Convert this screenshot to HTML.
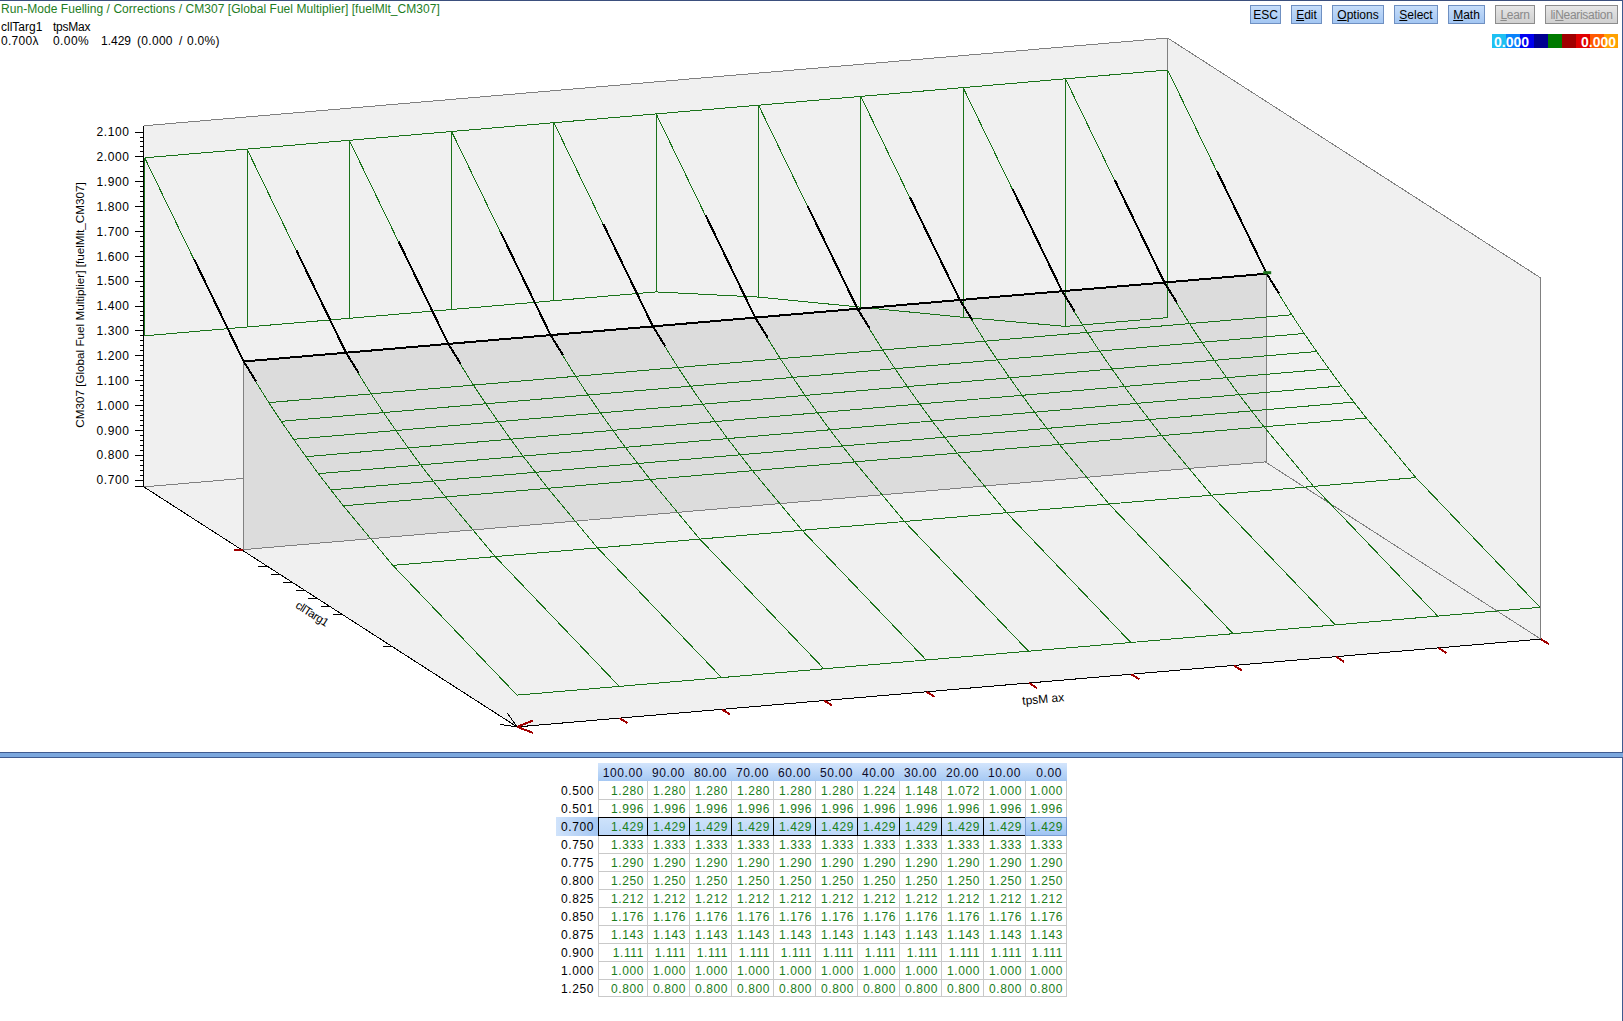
<!DOCTYPE html>
<html><head><meta charset="utf-8"><style>
html,body{margin:0;padding:0;width:1623px;height:1021px;overflow:hidden;background:#fff;position:relative}
body{font-family:"Liberation Sans",sans-serif;font-size:12px;color:#000}
.abs{position:absolute}
#tb{position:absolute;left:0;top:0;width:1623px;height:1px;background:#3b4f7d}
#rb{position:absolute;left:1622px;top:0;width:1px;height:1021px;background:#3f5a8f}
.t{position:absolute;white-space:pre;line-height:14px}
.btn{position:absolute;top:5px;height:17px;border:1px solid #6f90c2;background:linear-gradient(#c6ddfa,#a3c6f2);font-size:12px;line-height:19px;text-align:center;color:#000;box-sizing:content-box;overflow:hidden}
.btn.dis{border-color:#8c8c8c;background:linear-gradient(#e6e6e6,#d0d0d0);color:#8a8a8a;letter-spacing:-0.3px}
.btn u{text-decoration:underline}
#cbar{position:absolute;left:1492px;top:34px;width:126px;height:14px;display:flex}
#cbar span{flex:1}
.cbt{position:absolute;top:34px;color:#fff;font-weight:bold;font-size:14px;line-height:16px}
svg{position:absolute;left:0;top:0}
svg line,svg polyline,svg polygon{shape-rendering:crispEdges}
.yl{font-family:"Liberation Sans",sans-serif;font-size:12px;text-anchor:end;fill:#000;letter-spacing:0.6px}
.al{font-family:"Liberation Sans",sans-serif;font-size:12px;fill:#000}
#sep{position:absolute;left:0;top:752px;width:1623px;height:4px;border-top:1px solid #3f5a8f;border-bottom:1px solid #3f5a8f;background:#7ba7dd}
.hdr{position:absolute;background:linear-gradient(#d3e5fc,#a5c8f3)}
.ht{position:absolute;height:18px;line-height:20px;text-align:right;color:#0a0a28;letter-spacing:0.6px}
.rl{position:absolute;left:556px;width:38px;height:18px;line-height:21px;text-align:right;color:#000;letter-spacing:0.6px}
.rlh{position:absolute;background:linear-gradient(90deg,#d0e3fb,#a3c6f2)}
.selfill{position:absolute;background:linear-gradient(#cfe3fb,#bcd7f8)}
.gl{position:absolute;background:#c9c9c9}
.bl{position:absolute;background:#000}
.cur{position:absolute;border:1px solid #7b9ed3;background:linear-gradient(#c4dcfa,#9fc4f2)}
.cell{position:absolute;height:18px;line-height:21px;text-align:right;color:#1a7d1a;letter-spacing:0.6px}
</style></head><body>
<div id="tb"></div><div id="rb"></div>
<div class="t" style="left:1px;top:2px;color:#1e7d1e;letter-spacing:0.05px">Run-Mode Fuelling / Corrections / CM307 [Global Fuel Multiplier] [fuelMlt_CM307]</div>
<div class="t" style="left:1px;top:20px">cllTarg1</div>
<div class="t" style="left:53px;top:20px;letter-spacing:-0.25px">tpsMax</div>
<div class="t" style="left:1px;top:34px;letter-spacing:0.3px">0.700λ</div>
<div class="t" style="left:53px;top:34px;letter-spacing:0.4px">0.00%</div>
<div class="t" style="left:101px;top:34px">1.429</div>
<div class="t" style="left:137px;top:34px;letter-spacing:0.3px">(0.000</div>
<div class="t" style="left:179px;top:34px">/</div>
<div class="t" style="left:187px;top:34px;letter-spacing:0.3px">0.0%)</div>
<div class="btn" style="left:1250px;width:29px">ESC</div>
<div class="btn" style="left:1291px;width:29px"><u>E</u>dit</div>
<div class="btn" style="left:1332px;width:50px"><u>O</u>ptions</div>
<div class="btn" style="left:1394px;width:42px"><u>S</u>elect</div>
<div class="btn" style="left:1448px;width:35px"><u>M</u>ath</div>
<div class="btn dis" style="left:1495px;width:38px"><u>L</u>earn</div>
<div class="btn dis" style="left:1545px;width:71px">li<u>N</u>earisation</div>
<div id="cbar"><span style="background:#1ec0f2"></span><span style="background:#0a82fa"></span><span style="background:#0000f0"></span><span style="background:#000090"></span><span style="background:#007a00"></span><span style="background:#a00000"></span><span style="background:#e00000"></span><span style="background:#ff5a00"></span><span style="background:#ffa000"></span></div>
<div class="cbt" style="left:1494px">0.000</div>
<div class="cbt" style="left:1581px">0.000</div>
<svg width="1623" height="752" viewBox="0 0 1623 752">
<polygon points="143.9,125.8 1167.6,38.0 1540.8,278.0 1540.8,639.1 517.1,726.9 143.9,486.9" fill="#f0f0f0"/>
<line x1="143.9" y1="125.8" x2="1167.6" y2="38.0" stroke="#808080" stroke-width="1"/>
<line x1="1167.6" y1="38.0" x2="1540.8" y2="278.0" stroke="#808080" stroke-width="1"/>
<line x1="1167.6" y1="38.0" x2="1167.6" y2="399.1" stroke="#808080" stroke-width="1"/>
<line x1="1540.8" y1="278.0" x2="1540.8" y2="639.1" stroke="#808080" stroke-width="1"/>
<line x1="143.9" y1="486.9" x2="1167.6" y2="399.1" stroke="#808080" stroke-width="1"/>
<line x1="1167.6" y1="399.1" x2="1540.8" y2="639.1" stroke="#808080" stroke-width="1"/>
<polygon points="243.7,361.5 1266.7,273.7 1266.7,461.8 243.7,549.6" fill="#dcdcdc" stroke="#808080" stroke-width="1"/>
<line x1="143.9" y1="125.8" x2="143.9" y2="486.9" stroke="#000" stroke-width="1"/>
<line x1="143.9" y1="486.9" x2="517.1" y2="726.9" stroke="#000" stroke-width="1"/>
<line x1="517.1" y1="726.9" x2="1540.8" y2="639.1" stroke="#000" stroke-width="1"/>
<line x1="135.4" y1="480.0" x2="143.9" y2="480.0" stroke="#000" stroke-width="1"/>
<text x="129.5" y="484.3" class="yl">0.700</text>
<line x1="140.4" y1="475.0" x2="143.9" y2="475.0" stroke="#000" stroke-width="1"/>
<line x1="140.4" y1="470.0" x2="143.9" y2="470.0" stroke="#000" stroke-width="1"/>
<line x1="140.4" y1="465.1" x2="143.9" y2="465.1" stroke="#000" stroke-width="1"/>
<line x1="140.4" y1="460.1" x2="143.9" y2="460.1" stroke="#000" stroke-width="1"/>
<line x1="135.4" y1="455.1" x2="143.9" y2="455.1" stroke="#000" stroke-width="1"/>
<text x="129.5" y="459.4" class="yl">0.800</text>
<line x1="140.4" y1="450.2" x2="143.9" y2="450.2" stroke="#000" stroke-width="1"/>
<line x1="140.4" y1="445.2" x2="143.9" y2="445.2" stroke="#000" stroke-width="1"/>
<line x1="140.4" y1="440.2" x2="143.9" y2="440.2" stroke="#000" stroke-width="1"/>
<line x1="140.4" y1="435.2" x2="143.9" y2="435.2" stroke="#000" stroke-width="1"/>
<line x1="135.4" y1="430.3" x2="143.9" y2="430.3" stroke="#000" stroke-width="1"/>
<text x="129.5" y="434.6" class="yl">0.900</text>
<line x1="140.4" y1="425.3" x2="143.9" y2="425.3" stroke="#000" stroke-width="1"/>
<line x1="140.4" y1="420.3" x2="143.9" y2="420.3" stroke="#000" stroke-width="1"/>
<line x1="140.4" y1="415.4" x2="143.9" y2="415.4" stroke="#000" stroke-width="1"/>
<line x1="140.4" y1="410.4" x2="143.9" y2="410.4" stroke="#000" stroke-width="1"/>
<line x1="135.4" y1="405.4" x2="143.9" y2="405.4" stroke="#000" stroke-width="1"/>
<text x="129.5" y="409.7" class="yl">1.000</text>
<line x1="140.4" y1="400.4" x2="143.9" y2="400.4" stroke="#000" stroke-width="1"/>
<line x1="140.4" y1="395.5" x2="143.9" y2="395.5" stroke="#000" stroke-width="1"/>
<line x1="140.4" y1="390.5" x2="143.9" y2="390.5" stroke="#000" stroke-width="1"/>
<line x1="140.4" y1="385.5" x2="143.9" y2="385.5" stroke="#000" stroke-width="1"/>
<line x1="135.4" y1="380.6" x2="143.9" y2="380.6" stroke="#000" stroke-width="1"/>
<text x="129.5" y="384.9" class="yl">1.100</text>
<line x1="140.4" y1="375.6" x2="143.9" y2="375.6" stroke="#000" stroke-width="1"/>
<line x1="140.4" y1="370.6" x2="143.9" y2="370.6" stroke="#000" stroke-width="1"/>
<line x1="140.4" y1="365.6" x2="143.9" y2="365.6" stroke="#000" stroke-width="1"/>
<line x1="140.4" y1="360.7" x2="143.9" y2="360.7" stroke="#000" stroke-width="1"/>
<line x1="135.4" y1="355.7" x2="143.9" y2="355.7" stroke="#000" stroke-width="1"/>
<text x="129.5" y="360.0" class="yl">1.200</text>
<line x1="140.4" y1="350.7" x2="143.9" y2="350.7" stroke="#000" stroke-width="1"/>
<line x1="140.4" y1="345.8" x2="143.9" y2="345.8" stroke="#000" stroke-width="1"/>
<line x1="140.4" y1="340.8" x2="143.9" y2="340.8" stroke="#000" stroke-width="1"/>
<line x1="140.4" y1="335.8" x2="143.9" y2="335.8" stroke="#000" stroke-width="1"/>
<line x1="135.4" y1="330.8" x2="143.9" y2="330.8" stroke="#000" stroke-width="1"/>
<text x="129.5" y="335.1" class="yl">1.300</text>
<line x1="140.4" y1="325.9" x2="143.9" y2="325.9" stroke="#000" stroke-width="1"/>
<line x1="140.4" y1="320.9" x2="143.9" y2="320.9" stroke="#000" stroke-width="1"/>
<line x1="140.4" y1="315.9" x2="143.9" y2="315.9" stroke="#000" stroke-width="1"/>
<line x1="140.4" y1="311.0" x2="143.9" y2="311.0" stroke="#000" stroke-width="1"/>
<line x1="135.4" y1="306.0" x2="143.9" y2="306.0" stroke="#000" stroke-width="1"/>
<text x="129.5" y="310.3" class="yl">1.400</text>
<line x1="140.4" y1="301.0" x2="143.9" y2="301.0" stroke="#000" stroke-width="1"/>
<line x1="140.4" y1="296.0" x2="143.9" y2="296.0" stroke="#000" stroke-width="1"/>
<line x1="140.4" y1="291.1" x2="143.9" y2="291.1" stroke="#000" stroke-width="1"/>
<line x1="140.4" y1="286.1" x2="143.9" y2="286.1" stroke="#000" stroke-width="1"/>
<line x1="135.4" y1="281.1" x2="143.9" y2="281.1" stroke="#000" stroke-width="1"/>
<text x="129.5" y="285.4" class="yl">1.500</text>
<line x1="140.4" y1="276.2" x2="143.9" y2="276.2" stroke="#000" stroke-width="1"/>
<line x1="140.4" y1="271.2" x2="143.9" y2="271.2" stroke="#000" stroke-width="1"/>
<line x1="140.4" y1="266.2" x2="143.9" y2="266.2" stroke="#000" stroke-width="1"/>
<line x1="140.4" y1="261.2" x2="143.9" y2="261.2" stroke="#000" stroke-width="1"/>
<line x1="135.4" y1="256.3" x2="143.9" y2="256.3" stroke="#000" stroke-width="1"/>
<text x="129.5" y="260.6" class="yl">1.600</text>
<line x1="140.4" y1="251.3" x2="143.9" y2="251.3" stroke="#000" stroke-width="1"/>
<line x1="140.4" y1="246.3" x2="143.9" y2="246.3" stroke="#000" stroke-width="1"/>
<line x1="140.4" y1="241.4" x2="143.9" y2="241.4" stroke="#000" stroke-width="1"/>
<line x1="140.4" y1="236.4" x2="143.9" y2="236.4" stroke="#000" stroke-width="1"/>
<line x1="135.4" y1="231.4" x2="143.9" y2="231.4" stroke="#000" stroke-width="1"/>
<text x="129.5" y="235.7" class="yl">1.700</text>
<line x1="140.4" y1="226.4" x2="143.9" y2="226.4" stroke="#000" stroke-width="1"/>
<line x1="140.4" y1="221.5" x2="143.9" y2="221.5" stroke="#000" stroke-width="1"/>
<line x1="140.4" y1="216.5" x2="143.9" y2="216.5" stroke="#000" stroke-width="1"/>
<line x1="140.4" y1="211.5" x2="143.9" y2="211.5" stroke="#000" stroke-width="1"/>
<line x1="135.4" y1="206.6" x2="143.9" y2="206.6" stroke="#000" stroke-width="1"/>
<text x="129.5" y="210.9" class="yl">1.800</text>
<line x1="140.4" y1="201.6" x2="143.9" y2="201.6" stroke="#000" stroke-width="1"/>
<line x1="140.4" y1="196.6" x2="143.9" y2="196.6" stroke="#000" stroke-width="1"/>
<line x1="140.4" y1="191.6" x2="143.9" y2="191.6" stroke="#000" stroke-width="1"/>
<line x1="140.4" y1="186.7" x2="143.9" y2="186.7" stroke="#000" stroke-width="1"/>
<line x1="135.4" y1="181.7" x2="143.9" y2="181.7" stroke="#000" stroke-width="1"/>
<text x="129.5" y="186.0" class="yl">1.900</text>
<line x1="140.4" y1="176.7" x2="143.9" y2="176.7" stroke="#000" stroke-width="1"/>
<line x1="140.4" y1="171.8" x2="143.9" y2="171.8" stroke="#000" stroke-width="1"/>
<line x1="140.4" y1="166.8" x2="143.9" y2="166.8" stroke="#000" stroke-width="1"/>
<line x1="140.4" y1="161.8" x2="143.9" y2="161.8" stroke="#000" stroke-width="1"/>
<line x1="135.4" y1="156.8" x2="143.9" y2="156.8" stroke="#000" stroke-width="1"/>
<text x="129.5" y="161.1" class="yl">2.000</text>
<line x1="140.4" y1="151.9" x2="143.9" y2="151.9" stroke="#000" stroke-width="1"/>
<line x1="140.4" y1="146.9" x2="143.9" y2="146.9" stroke="#000" stroke-width="1"/>
<line x1="140.4" y1="141.9" x2="143.9" y2="141.9" stroke="#000" stroke-width="1"/>
<line x1="140.4" y1="137.0" x2="143.9" y2="137.0" stroke="#000" stroke-width="1"/>
<line x1="135.4" y1="132.0" x2="143.9" y2="132.0" stroke="#000" stroke-width="1"/>
<text x="129.5" y="136.3" class="yl">2.100</text>
<line x1="135.4" y1="486.9" x2="143.9" y2="486.9" stroke="#000" stroke-width="1"/>
<polyline points="144.7,335.8 144.7,157.8 244.0,362.8 268.8,402.6 281.2,421.3 293.6,439.3 306.0,456.7 318.4,473.7 330.9,489.9 343.3,505.8 392.9,565.4 517.0,695.1" fill="none" stroke="#1a721a" stroke-width="1"/>
<polyline points="247.0,327.0 247.0,149.1 346.3,354.0 371.1,393.9 383.5,412.6 395.9,430.5 408.3,447.9 420.7,464.9 433.2,481.1 445.6,497.0 495.2,556.6 619.3,686.4" fill="none" stroke="#1a721a" stroke-width="1"/>
<polyline points="349.3,318.3 349.3,140.3 448.6,345.2 473.4,385.1 485.8,403.8 498.2,421.7 510.6,439.2 523.0,456.1 535.5,472.3 547.9,488.3 597.5,547.9 721.6,677.6" fill="none" stroke="#1a721a" stroke-width="1"/>
<polyline points="451.6,309.5 451.6,131.5 550.9,336.4 575.7,376.3 588.1,395.0 600.5,412.9 612.9,430.4 625.3,447.3 637.8,463.5 650.2,479.5 699.8,539.1 823.9,668.8" fill="none" stroke="#1a721a" stroke-width="1"/>
<polyline points="553.9,300.7 553.9,122.7 653.2,327.7 678.0,367.5 690.4,386.2 702.8,404.2 715.2,421.6 727.6,438.6 740.1,454.8 752.5,470.7 802.1,530.3 926.2,660.0" fill="none" stroke="#1a721a" stroke-width="1"/>
<polyline points="656.2,291.9 656.2,113.9 755.5,318.9 780.3,358.7 792.7,377.4 805.1,395.4 817.5,412.8 829.9,429.8 842.4,446.0 854.8,461.9 904.4,521.5 1028.5,651.2" fill="none" stroke="#1a721a" stroke-width="1"/>
<polyline points="758.5,297.1 758.5,105.2 857.8,310.1 882.6,350.0 895.0,368.7 907.4,386.6 919.8,404.0 932.2,421.0 944.6,437.2 957.1,453.1 1006.7,512.7 1130.8,642.5" fill="none" stroke="#1a721a" stroke-width="1"/>
<polyline points="860.8,307.2 860.8,96.4 960.1,301.3 984.9,341.2 997.3,359.9 1009.7,377.8 1022.1,395.3 1034.5,412.2 1047.0,428.4 1059.4,444.4 1109.0,504.0 1233.1,633.7" fill="none" stroke="#1a721a" stroke-width="1"/>
<polyline points="963.1,317.3 963.1,87.6 1062.4,292.5 1087.2,332.4 1099.6,351.1 1112.0,369.0 1124.4,386.5 1136.8,403.4 1149.3,419.6 1161.7,435.6 1211.3,495.2 1335.4,624.9" fill="none" stroke="#1a721a" stroke-width="1"/>
<polyline points="1065.4,326.4 1065.4,78.8 1164.7,283.8 1189.5,323.6 1201.9,342.3 1214.3,360.3 1226.7,377.7 1239.1,394.7 1251.6,410.9 1264.0,426.8 1313.6,486.4 1437.7,616.1" fill="none" stroke="#1a721a" stroke-width="1"/>
<polyline points="1167.7,317.6 1167.7,70.0 1267.0,275.0 1291.8,314.8 1304.2,333.5 1316.6,351.5 1329.0,368.9 1341.4,385.9 1353.9,402.1 1366.3,418.0 1415.9,477.6 1540.0,607.3" fill="none" stroke="#1a721a" stroke-width="1"/>
<polyline points="144.7,335.8 247.0,327.0 349.3,318.3 451.6,309.5 553.9,300.7 656.2,291.9 758.5,297.1 860.8,307.2 963.1,317.3 1065.4,326.4 1167.7,317.6" fill="none" stroke="#1a721a" stroke-width="1"/>
<polyline points="144.7,157.8 247.0,149.1 349.3,140.3 451.6,131.5 553.9,122.7 656.2,113.9 758.5,105.2 860.8,96.4 963.1,87.6 1065.4,78.8 1167.7,70.0" fill="none" stroke="#1a721a" stroke-width="1"/>
<polyline points="268.8,402.6 371.1,393.9 473.4,385.1 575.7,376.3 678.0,367.5 780.3,358.7 882.6,350.0 984.9,341.2 1087.2,332.4 1189.5,323.6 1291.8,314.8" fill="none" stroke="#1a721a" stroke-width="1"/>
<polyline points="281.2,421.3 383.5,412.6 485.8,403.8 588.1,395.0 690.4,386.2 792.7,377.4 895.0,368.7 997.3,359.9 1099.6,351.1 1201.9,342.3 1304.2,333.5" fill="none" stroke="#1a721a" stroke-width="1"/>
<polyline points="293.6,439.3 395.9,430.5 498.2,421.7 600.5,412.9 702.8,404.2 805.1,395.4 907.4,386.6 1009.7,377.8 1112.0,369.0 1214.3,360.3 1316.6,351.5" fill="none" stroke="#1a721a" stroke-width="1"/>
<polyline points="306.0,456.7 408.3,447.9 510.6,439.2 612.9,430.4 715.2,421.6 817.5,412.8 919.8,404.0 1022.1,395.3 1124.4,386.5 1226.7,377.7 1329.0,368.9" fill="none" stroke="#1a721a" stroke-width="1"/>
<polyline points="318.4,473.7 420.7,464.9 523.0,456.1 625.3,447.3 727.6,438.6 829.9,429.8 932.2,421.0 1034.5,412.2 1136.8,403.4 1239.1,394.7 1341.4,385.9" fill="none" stroke="#1a721a" stroke-width="1"/>
<polyline points="330.9,489.9 433.2,481.1 535.5,472.3 637.8,463.5 740.1,454.8 842.4,446.0 944.6,437.2 1047.0,428.4 1149.3,419.6 1251.6,410.9 1353.9,402.1" fill="none" stroke="#1a721a" stroke-width="1"/>
<polyline points="343.3,505.8 445.6,497.0 547.9,488.3 650.2,479.5 752.5,470.7 854.8,461.9 957.1,453.1 1059.4,444.4 1161.7,435.6 1264.0,426.8 1366.3,418.0" fill="none" stroke="#1a721a" stroke-width="1"/>
<polyline points="392.9,565.4 495.2,556.6 597.5,547.9 699.8,539.1 802.1,530.3 904.4,521.5 1006.7,512.7 1109.0,504.0 1211.3,495.2 1313.6,486.4 1415.9,477.6" fill="none" stroke="#1a721a" stroke-width="1"/>
<polyline points="517.0,695.1 619.3,686.4 721.6,677.6 823.9,668.8 926.2,660.0 1028.5,651.2 1130.8,642.5 1233.1,633.7 1335.4,624.9 1437.7,616.1 1540.0,607.3" fill="none" stroke="#1a721a" stroke-width="1"/>
<polyline points="243.7,361.5 346.0,352.7 448.3,343.9 550.6,335.1 652.9,326.4 755.2,317.6 857.5,308.8 959.8,300.0 1062.1,291.2 1164.4,282.5 1266.7,273.7" fill="none" stroke="#000" stroke-width="2"/>
<polyline points="194.0,259.0 243.7,361.5 256.1,381.4" fill="none" stroke="#000" stroke-width="2"/>
<polyline points="296.3,250.2 346.0,352.7 358.4,372.6" fill="none" stroke="#000" stroke-width="2"/>
<polyline points="398.6,241.5 448.3,343.9 460.7,363.9" fill="none" stroke="#000" stroke-width="2"/>
<polyline points="500.9,232.7 550.6,335.1 563.0,355.1" fill="none" stroke="#000" stroke-width="2"/>
<polyline points="603.2,223.9 652.9,326.4 665.3,346.3" fill="none" stroke="#000" stroke-width="2"/>
<polyline points="705.5,215.1 755.2,317.6 767.6,337.5" fill="none" stroke="#000" stroke-width="2"/>
<polyline points="807.8,206.3 857.5,308.8 869.9,328.7" fill="none" stroke="#000" stroke-width="2"/>
<polyline points="910.1,197.6 959.8,300.0 972.2,320.0" fill="none" stroke="#000" stroke-width="2"/>
<polyline points="1012.4,188.8 1062.1,291.2 1074.5,311.2" fill="none" stroke="#000" stroke-width="2"/>
<polyline points="1114.7,180.0 1164.4,282.5 1176.8,302.4" fill="none" stroke="#000" stroke-width="2"/>
<polyline points="1217.0,171.2 1266.7,273.7 1279.1,293.6" fill="none" stroke="#000" stroke-width="2"/>
<rect x="1263.2" y="271.2" width="8" height="3" fill="#1a721a"/>
<line x1="258.3" y1="566.9" x2="268.3" y2="566.9" stroke="#000" stroke-width="1"/>
<line x1="270.7" y1="574.9" x2="280.7" y2="574.9" stroke="#000" stroke-width="1"/>
<line x1="283.2" y1="582.9" x2="293.2" y2="582.9" stroke="#000" stroke-width="1"/>
<line x1="295.6" y1="590.9" x2="305.6" y2="590.9" stroke="#000" stroke-width="1"/>
<line x1="308.1" y1="598.9" x2="318.1" y2="598.9" stroke="#000" stroke-width="1"/>
<line x1="320.5" y1="606.9" x2="330.5" y2="606.9" stroke="#000" stroke-width="1"/>
<line x1="332.9" y1="614.9" x2="342.9" y2="614.9" stroke="#000" stroke-width="1"/>
<line x1="382.7" y1="646.9" x2="392.7" y2="646.9" stroke="#000" stroke-width="1"/>
<line x1="234.4" y1="549.6" x2="243.4" y2="549.6" stroke="#a00000" stroke-width="2"/>
<line x1="500.1" y1="724.4" x2="517.1" y2="726.9" stroke="#000" stroke-width="1"/>
<line x1="507.6" y1="713.4" x2="517.1" y2="726.9" stroke="#000" stroke-width="1"/>
<line x1="517.1" y1="726.9" x2="532.6" y2="720.6" stroke="#a00000" stroke-width="2"/>
<line x1="517.1" y1="726.9" x2="533.1" y2="732.9" stroke="#a00000" stroke-width="2"/>
<line x1="619.5" y1="718.1" x2="627.5" y2="723.1" stroke="#a00000" stroke-width="2"/>
<line x1="721.8" y1="709.3" x2="729.8" y2="714.3" stroke="#a00000" stroke-width="2"/>
<line x1="824.2" y1="700.6" x2="832.2" y2="705.6" stroke="#a00000" stroke-width="2"/>
<line x1="926.6" y1="691.8" x2="934.6" y2="696.8" stroke="#a00000" stroke-width="2"/>
<line x1="1029.0" y1="683.0" x2="1037.0" y2="688.0" stroke="#a00000" stroke-width="2"/>
<line x1="1131.3" y1="674.2" x2="1139.3" y2="679.2" stroke="#a00000" stroke-width="2"/>
<line x1="1233.7" y1="665.4" x2="1241.7" y2="670.4" stroke="#a00000" stroke-width="2"/>
<line x1="1336.1" y1="656.7" x2="1344.1" y2="661.7" stroke="#a00000" stroke-width="2"/>
<line x1="1438.4" y1="647.9" x2="1446.4" y2="652.9" stroke="#a00000" stroke-width="2"/>
<line x1="1540.8" y1="639.1" x2="1548.8" y2="644.1" stroke="#a00000" stroke-width="2"/>
<text x="0" y="0" class="al" transform="translate(84,305) rotate(-90)" text-anchor="middle" style="font-size:11.7px">CM307 [Global Fuel Multiplier] [fuelMlt_CM307]</text>
<text x="0" y="0" class="al" transform="translate(310,617) rotate(32.7)" text-anchor="middle" style="font-size:11.5px;letter-spacing:-0.4px">cllTarg1</text>
<text x="0" y="0" class="al" transform="translate(1043.5,703) rotate(-4.9)" text-anchor="middle">tpsM ax</text>
</svg>
<div id="sep"></div>
<div class="hdr" style="left:598px;top:763px;width:469px;height:18px"></div>
<div class="ht" style="left:598px;top:763px;width:45px">100.00</div>
<div class="ht" style="left:647px;top:763px;width:38px">90.00</div>
<div class="ht" style="left:689px;top:763px;width:38px">80.00</div>
<div class="ht" style="left:731px;top:763px;width:38px">70.00</div>
<div class="ht" style="left:773px;top:763px;width:38px">60.00</div>
<div class="ht" style="left:815px;top:763px;width:38px">50.00</div>
<div class="ht" style="left:857px;top:763px;width:38px">40.00</div>
<div class="ht" style="left:899px;top:763px;width:38px">30.00</div>
<div class="ht" style="left:941px;top:763px;width:38px">20.00</div>
<div class="ht" style="left:983px;top:763px;width:38px">10.00</div>
<div class="ht" style="left:1025px;top:763px;width:37px">0.00</div>
<div class="rlh" style="left:556px;top:817px;width:42px;height:19px"></div>
<div class="selfill" style="left:598px;top:817px;width:468px;height:18px"></div>
<div class="gl" style="left:598px;top:781px;width:1px;height:216px"></div>
<div class="gl" style="left:647px;top:781px;width:1px;height:216px"></div>
<div class="gl" style="left:689px;top:781px;width:1px;height:216px"></div>
<div class="gl" style="left:731px;top:781px;width:1px;height:216px"></div>
<div class="gl" style="left:773px;top:781px;width:1px;height:216px"></div>
<div class="gl" style="left:815px;top:781px;width:1px;height:216px"></div>
<div class="gl" style="left:857px;top:781px;width:1px;height:216px"></div>
<div class="gl" style="left:899px;top:781px;width:1px;height:216px"></div>
<div class="gl" style="left:941px;top:781px;width:1px;height:216px"></div>
<div class="gl" style="left:983px;top:781px;width:1px;height:216px"></div>
<div class="gl" style="left:1025px;top:781px;width:1px;height:216px"></div>
<div class="gl" style="left:1066px;top:781px;width:1px;height:216px"></div>
<div class="gl" style="left:598px;top:799px;width:469px;height:1px"></div>
<div class="gl" style="left:598px;top:817px;width:469px;height:1px"></div>
<div class="gl" style="left:598px;top:835px;width:469px;height:1px"></div>
<div class="gl" style="left:598px;top:853px;width:469px;height:1px"></div>
<div class="gl" style="left:598px;top:871px;width:469px;height:1px"></div>
<div class="gl" style="left:598px;top:889px;width:469px;height:1px"></div>
<div class="gl" style="left:598px;top:907px;width:469px;height:1px"></div>
<div class="gl" style="left:598px;top:925px;width:469px;height:1px"></div>
<div class="gl" style="left:598px;top:943px;width:469px;height:1px"></div>
<div class="gl" style="left:598px;top:961px;width:469px;height:1px"></div>
<div class="gl" style="left:598px;top:979px;width:469px;height:1px"></div>
<div class="gl" style="left:598px;top:996px;width:469px;height:1px"></div>
<div class="bl" style="left:598px;top:817px;width:428px;height:1px"></div>
<div class="bl" style="left:598px;top:835px;width:428px;height:1px"></div>
<div class="bl" style="left:598px;top:817px;width:1px;height:19px"></div>
<div class="bl" style="left:647px;top:817px;width:1px;height:19px"></div>
<div class="bl" style="left:689px;top:817px;width:1px;height:19px"></div>
<div class="bl" style="left:731px;top:817px;width:1px;height:19px"></div>
<div class="bl" style="left:773px;top:817px;width:1px;height:19px"></div>
<div class="bl" style="left:815px;top:817px;width:1px;height:19px"></div>
<div class="bl" style="left:857px;top:817px;width:1px;height:19px"></div>
<div class="bl" style="left:899px;top:817px;width:1px;height:19px"></div>
<div class="bl" style="left:941px;top:817px;width:1px;height:19px"></div>
<div class="bl" style="left:983px;top:817px;width:1px;height:19px"></div>
<div class="bl" style="left:1025px;top:817px;width:1px;height:19px"></div>
<div class="cur" style="left:1025px;top:817px;width:40px;height:17px"></div>
<div class="rl" style="top:781px">0.500</div>
<div class="cell" style="left:598px;top:781px;width:46px">1.280</div>
<div class="cell" style="left:647px;top:781px;width:39px">1.280</div>
<div class="cell" style="left:689px;top:781px;width:39px">1.280</div>
<div class="cell" style="left:731px;top:781px;width:39px">1.280</div>
<div class="cell" style="left:773px;top:781px;width:39px">1.280</div>
<div class="cell" style="left:815px;top:781px;width:39px">1.280</div>
<div class="cell" style="left:857px;top:781px;width:39px">1.224</div>
<div class="cell" style="left:899px;top:781px;width:39px">1.148</div>
<div class="cell" style="left:941px;top:781px;width:39px">1.072</div>
<div class="cell" style="left:983px;top:781px;width:39px">1.000</div>
<div class="cell" style="left:1025px;top:781px;width:38px">1.000</div>
<div class="rl" style="top:799px">0.501</div>
<div class="cell" style="left:598px;top:799px;width:46px">1.996</div>
<div class="cell" style="left:647px;top:799px;width:39px">1.996</div>
<div class="cell" style="left:689px;top:799px;width:39px">1.996</div>
<div class="cell" style="left:731px;top:799px;width:39px">1.996</div>
<div class="cell" style="left:773px;top:799px;width:39px">1.996</div>
<div class="cell" style="left:815px;top:799px;width:39px">1.996</div>
<div class="cell" style="left:857px;top:799px;width:39px">1.996</div>
<div class="cell" style="left:899px;top:799px;width:39px">1.996</div>
<div class="cell" style="left:941px;top:799px;width:39px">1.996</div>
<div class="cell" style="left:983px;top:799px;width:39px">1.996</div>
<div class="cell" style="left:1025px;top:799px;width:38px">1.996</div>
<div class="rl" style="top:817px">0.700</div>
<div class="cell" style="left:598px;top:817px;width:46px">1.429</div>
<div class="cell" style="left:647px;top:817px;width:39px">1.429</div>
<div class="cell" style="left:689px;top:817px;width:39px">1.429</div>
<div class="cell" style="left:731px;top:817px;width:39px">1.429</div>
<div class="cell" style="left:773px;top:817px;width:39px">1.429</div>
<div class="cell" style="left:815px;top:817px;width:39px">1.429</div>
<div class="cell" style="left:857px;top:817px;width:39px">1.429</div>
<div class="cell" style="left:899px;top:817px;width:39px">1.429</div>
<div class="cell" style="left:941px;top:817px;width:39px">1.429</div>
<div class="cell" style="left:983px;top:817px;width:39px">1.429</div>
<div class="cell" style="left:1025px;top:817px;width:38px">1.429</div>
<div class="rl" style="top:835px">0.750</div>
<div class="cell" style="left:598px;top:835px;width:46px">1.333</div>
<div class="cell" style="left:647px;top:835px;width:39px">1.333</div>
<div class="cell" style="left:689px;top:835px;width:39px">1.333</div>
<div class="cell" style="left:731px;top:835px;width:39px">1.333</div>
<div class="cell" style="left:773px;top:835px;width:39px">1.333</div>
<div class="cell" style="left:815px;top:835px;width:39px">1.333</div>
<div class="cell" style="left:857px;top:835px;width:39px">1.333</div>
<div class="cell" style="left:899px;top:835px;width:39px">1.333</div>
<div class="cell" style="left:941px;top:835px;width:39px">1.333</div>
<div class="cell" style="left:983px;top:835px;width:39px">1.333</div>
<div class="cell" style="left:1025px;top:835px;width:38px">1.333</div>
<div class="rl" style="top:853px">0.775</div>
<div class="cell" style="left:598px;top:853px;width:46px">1.290</div>
<div class="cell" style="left:647px;top:853px;width:39px">1.290</div>
<div class="cell" style="left:689px;top:853px;width:39px">1.290</div>
<div class="cell" style="left:731px;top:853px;width:39px">1.290</div>
<div class="cell" style="left:773px;top:853px;width:39px">1.290</div>
<div class="cell" style="left:815px;top:853px;width:39px">1.290</div>
<div class="cell" style="left:857px;top:853px;width:39px">1.290</div>
<div class="cell" style="left:899px;top:853px;width:39px">1.290</div>
<div class="cell" style="left:941px;top:853px;width:39px">1.290</div>
<div class="cell" style="left:983px;top:853px;width:39px">1.290</div>
<div class="cell" style="left:1025px;top:853px;width:38px">1.290</div>
<div class="rl" style="top:871px">0.800</div>
<div class="cell" style="left:598px;top:871px;width:46px">1.250</div>
<div class="cell" style="left:647px;top:871px;width:39px">1.250</div>
<div class="cell" style="left:689px;top:871px;width:39px">1.250</div>
<div class="cell" style="left:731px;top:871px;width:39px">1.250</div>
<div class="cell" style="left:773px;top:871px;width:39px">1.250</div>
<div class="cell" style="left:815px;top:871px;width:39px">1.250</div>
<div class="cell" style="left:857px;top:871px;width:39px">1.250</div>
<div class="cell" style="left:899px;top:871px;width:39px">1.250</div>
<div class="cell" style="left:941px;top:871px;width:39px">1.250</div>
<div class="cell" style="left:983px;top:871px;width:39px">1.250</div>
<div class="cell" style="left:1025px;top:871px;width:38px">1.250</div>
<div class="rl" style="top:889px">0.825</div>
<div class="cell" style="left:598px;top:889px;width:46px">1.212</div>
<div class="cell" style="left:647px;top:889px;width:39px">1.212</div>
<div class="cell" style="left:689px;top:889px;width:39px">1.212</div>
<div class="cell" style="left:731px;top:889px;width:39px">1.212</div>
<div class="cell" style="left:773px;top:889px;width:39px">1.212</div>
<div class="cell" style="left:815px;top:889px;width:39px">1.212</div>
<div class="cell" style="left:857px;top:889px;width:39px">1.212</div>
<div class="cell" style="left:899px;top:889px;width:39px">1.212</div>
<div class="cell" style="left:941px;top:889px;width:39px">1.212</div>
<div class="cell" style="left:983px;top:889px;width:39px">1.212</div>
<div class="cell" style="left:1025px;top:889px;width:38px">1.212</div>
<div class="rl" style="top:907px">0.850</div>
<div class="cell" style="left:598px;top:907px;width:46px">1.176</div>
<div class="cell" style="left:647px;top:907px;width:39px">1.176</div>
<div class="cell" style="left:689px;top:907px;width:39px">1.176</div>
<div class="cell" style="left:731px;top:907px;width:39px">1.176</div>
<div class="cell" style="left:773px;top:907px;width:39px">1.176</div>
<div class="cell" style="left:815px;top:907px;width:39px">1.176</div>
<div class="cell" style="left:857px;top:907px;width:39px">1.176</div>
<div class="cell" style="left:899px;top:907px;width:39px">1.176</div>
<div class="cell" style="left:941px;top:907px;width:39px">1.176</div>
<div class="cell" style="left:983px;top:907px;width:39px">1.176</div>
<div class="cell" style="left:1025px;top:907px;width:38px">1.176</div>
<div class="rl" style="top:925px">0.875</div>
<div class="cell" style="left:598px;top:925px;width:46px">1.143</div>
<div class="cell" style="left:647px;top:925px;width:39px">1.143</div>
<div class="cell" style="left:689px;top:925px;width:39px">1.143</div>
<div class="cell" style="left:731px;top:925px;width:39px">1.143</div>
<div class="cell" style="left:773px;top:925px;width:39px">1.143</div>
<div class="cell" style="left:815px;top:925px;width:39px">1.143</div>
<div class="cell" style="left:857px;top:925px;width:39px">1.143</div>
<div class="cell" style="left:899px;top:925px;width:39px">1.143</div>
<div class="cell" style="left:941px;top:925px;width:39px">1.143</div>
<div class="cell" style="left:983px;top:925px;width:39px">1.143</div>
<div class="cell" style="left:1025px;top:925px;width:38px">1.143</div>
<div class="rl" style="top:943px">0.900</div>
<div class="cell" style="left:598px;top:943px;width:46px">1.111</div>
<div class="cell" style="left:647px;top:943px;width:39px">1.111</div>
<div class="cell" style="left:689px;top:943px;width:39px">1.111</div>
<div class="cell" style="left:731px;top:943px;width:39px">1.111</div>
<div class="cell" style="left:773px;top:943px;width:39px">1.111</div>
<div class="cell" style="left:815px;top:943px;width:39px">1.111</div>
<div class="cell" style="left:857px;top:943px;width:39px">1.111</div>
<div class="cell" style="left:899px;top:943px;width:39px">1.111</div>
<div class="cell" style="left:941px;top:943px;width:39px">1.111</div>
<div class="cell" style="left:983px;top:943px;width:39px">1.111</div>
<div class="cell" style="left:1025px;top:943px;width:38px">1.111</div>
<div class="rl" style="top:961px">1.000</div>
<div class="cell" style="left:598px;top:961px;width:46px">1.000</div>
<div class="cell" style="left:647px;top:961px;width:39px">1.000</div>
<div class="cell" style="left:689px;top:961px;width:39px">1.000</div>
<div class="cell" style="left:731px;top:961px;width:39px">1.000</div>
<div class="cell" style="left:773px;top:961px;width:39px">1.000</div>
<div class="cell" style="left:815px;top:961px;width:39px">1.000</div>
<div class="cell" style="left:857px;top:961px;width:39px">1.000</div>
<div class="cell" style="left:899px;top:961px;width:39px">1.000</div>
<div class="cell" style="left:941px;top:961px;width:39px">1.000</div>
<div class="cell" style="left:983px;top:961px;width:39px">1.000</div>
<div class="cell" style="left:1025px;top:961px;width:38px">1.000</div>
<div class="rl" style="top:979px">1.250</div>
<div class="cell" style="left:598px;top:979px;width:46px">0.800</div>
<div class="cell" style="left:647px;top:979px;width:39px">0.800</div>
<div class="cell" style="left:689px;top:979px;width:39px">0.800</div>
<div class="cell" style="left:731px;top:979px;width:39px">0.800</div>
<div class="cell" style="left:773px;top:979px;width:39px">0.800</div>
<div class="cell" style="left:815px;top:979px;width:39px">0.800</div>
<div class="cell" style="left:857px;top:979px;width:39px">0.800</div>
<div class="cell" style="left:899px;top:979px;width:39px">0.800</div>
<div class="cell" style="left:941px;top:979px;width:39px">0.800</div>
<div class="cell" style="left:983px;top:979px;width:39px">0.800</div>
<div class="cell" style="left:1025px;top:979px;width:38px">0.800</div>
</body></html>
